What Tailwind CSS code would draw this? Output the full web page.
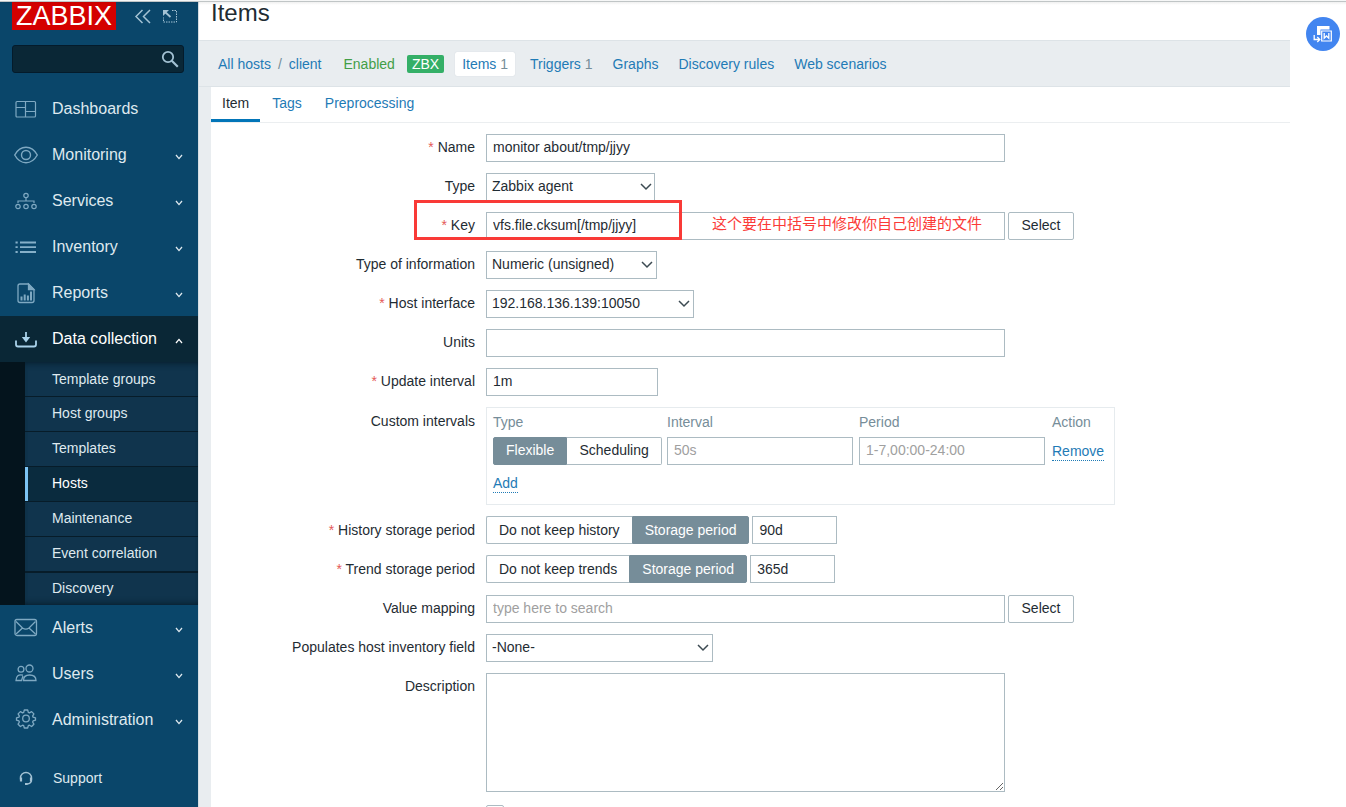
<!DOCTYPE html>
<html lang="en">
<head>
<meta charset="utf-8">
<meta name="viewport" content="width=device-width, initial-scale=1">
<title>Items</title>
<script src="https://cdn.jsdelivr.net/npm/@tailwindcss/browser@4"></script>
</head>
<body class="bg-white font-['Liberation_Sans','Noto_Sans_CJK_SC',sans-serif] text-sm text-[#1f2c33]">
<svg class="hidden">
  <symbol id="down" viewBox="0 0 8 6"><path d="M1 1l3 3.6L7 1" fill="none" stroke="currentColor" stroke-width="1.3"/></symbol>
  <symbol id="chev" viewBox="0 0 12 8"><path d="M1 1l5 5 5-5" fill="none" stroke="currentColor" stroke-width="1.5"/></symbol>
</svg>
<div class="relative flex h-screen overflow-hidden">
  <!-- browser edge shadow -->
  <div class="absolute inset-x-0 top-0 z-10 h-[5px] bg-linear-to-b from-black/10 to-transparent"></div>
  <div class="absolute inset-x-0 top-0 z-10 h-[2px] border-b border-[#c0c5c6] bg-[#f6f7f7]"></div>

  <aside class="flex w-[198px] shrink-0 flex-col bg-[#0a466a] text-[#dfe9ef]">
    <div class="flex h-[45px] shrink-0 items-start pt-[2px] pl-3">
      <a href="#" class="flex h-7 w-[104px] items-center justify-center bg-[#d40000] text-[27px] leading-7 text-white">ZABBIX</a>
      <button aria-label="Collapse" class="mt-[7px] ml-[18px] text-[#a3c2d4]"><svg class="h-[15px] w-[18px]" viewBox="0 0 18 15" fill="none" stroke="currentColor" stroke-width="1.5"><path d="M8.5 1L2 7.5 8.5 14M16 1L9.500 7.500 16 14"/></svg></button>
      <button aria-label="Hide" class="mt-[6px] ml-[10px] text-[#a3c2d4]"><svg class="h-4 w-4" viewBox="0 0 16 16" fill="none" stroke="currentColor"><path d="M10 2.500h4.500v11.500h-13V9.500" stroke-dasharray="1.500 1"/><path d="M2.500 3.500l6 5.500" stroke-width="1.800"/><path d="M1 2h6L1 8z" fill="currentColor" stroke="none"/></svg></button>
    </div>
    <div class="mx-3 mr-[14px] flex h-7 shrink-0 items-center rounded-[3px] border border-[#041b2b] bg-[#0a2736]">
      <input type="text" aria-label="Search" class="h-full min-w-0 flex-1 bg-transparent px-2 outline-none">
      <button aria-label="Search" class="mr-1 text-[#a3c2d4]"><svg class="h-[18px] w-[18px]" viewBox="0 0 18 18" fill="none" stroke="currentColor"><circle cx="7" cy="7" r="5.200" stroke-width="1.800"/><path d="M10.800 10.800l6 6" stroke-width="2.200"/></svg></button>
    </div>
    <nav class="mt-[13px] text-base">
      <a href="#" class="flex h-[46px] items-center pl-[14px]"><svg class="mr-[14px] h-6 w-6 text-[#7fa9c2]" viewBox="0 0 24 24" fill="none" stroke="currentColor" stroke-width="1.200"><rect x="2" y="4.500" width="19.500" height="15.500" rx="1"/><path d="M11.500 4.500V20M2 10.500h9.500M11.500 14.500h10"/></svg>Dashboards</a>
      <a href="#" class="flex h-[46px] items-center pr-[15px] pl-[14px]"><svg class="mr-[14px] h-6 w-6 text-[#7fa9c2]" viewBox="0 0 24 24" fill="none" stroke="currentColor" stroke-width="1.400"><path d="M.7 12C3.500 7 7.500 4.300 12 4.300S20.500 7 23.300 12c-2.800 5-6.800 7.700-11.300 7.700S3.500 17 .7 12z"/><circle cx="12" cy="12" r="4.500"/></svg><span class="flex-1">Monitoring</span><svg class="mt-1 h-[6px] w-2"><use href="#down"/></svg></a>
      <a href="#" class="flex h-[46px] items-center pr-[15px] pl-[14px]"><svg class="mr-[14px] h-6 w-6 text-[#7fa9c2]" viewBox="0 0 24 24" fill="none" stroke="currentColor" stroke-width="1.200"><circle cx="12" cy="6.500" r="2.200"/><circle cx="4" cy="17.500" r="2.200"/><circle cx="12" cy="17.500" r="2.200"/><circle cx="20" cy="17.500" r="2.200"/><path d="M12 8.700v3M4 14v-2h16v2"/></svg><span class="flex-1">Services</span><svg class="mt-1 h-[6px] w-2"><use href="#down"/></svg></a>
      <a href="#" class="flex h-[46px] items-center pr-[15px] pl-[14px]"><svg class="mr-[14px] h-6 w-6 text-[#86b0c9]" viewBox="0 0 24 24" fill="none" stroke="currentColor" stroke-width="1.800"><path d="M1.500 7.500h2.200M6 7.500h16M1.500 12.200h2.200M6 12.200h16M1.500 17h2.200M6 17h16"/></svg><span class="flex-1">Inventory</span><svg class="mt-1 h-[6px] w-2"><use href="#down"/></svg></a>
      <a href="#" class="flex h-[46px] items-center pr-[15px] pl-[14px]"><svg class="mr-[14px] h-6 w-6 text-[#7fa9c2]" viewBox="0 0 24 24" fill="none" stroke="currentColor" stroke-width="1.300"><path d="M6 3h8.500l5.500 5.500V19.500a2 2 0 0 1-2 2H6a2 2 0 0 1-2-2V5a2 2 0 0 1 2-2z"/><path d="M14.500 3v5.500H20z" fill="currentColor"/><path d="M7.500 19.500v-4M10.700 19.500v-6M13.900 19.500v-5M17 19.500v-9" stroke-width="2"/></svg><span class="flex-1">Reports</span><svg class="mt-1 h-[6px] w-2"><use href="#down"/></svg></a>
      <a href="#" class="flex h-[46px] items-center bg-[#0a2736] pr-[15px] pl-[14px] text-white"><svg class="mr-[14px] h-6 w-6 text-[#a9d2ea]" viewBox="0 0 24 24" fill="none" stroke="currentColor" stroke-width="1.800"><path d="M2 13.500v4a2 2 0 0 0 2 2h16a2 2 0 0 0 2-2v-4"/><path d="M12 5v7"/><path d="M7.800 10h8.400L12 15.500z" fill="currentColor" stroke="none"/></svg><span class="flex-1">Data collection</span><svg class="mt-1 h-[6px] w-2 rotate-180"><use href="#down"/></svg></a>
      <div class="border-l-[25px] border-[#04141d] bg-[#10344d] text-sm shadow-[inset_0_6px_6px_-5px_#061c2a,inset_0_-6px_6px_-5px_#061c2a]">
        <a href="#" class="flex h-[34px] items-center pl-[27px]">Template groups</a>
        <a href="#" class="flex h-[35px] items-center border-t border-[#071c29] pb-[2px] pl-[27px]">Host groups</a>
        <a href="#" class="flex h-[35px] items-center border-t border-[#071c29] pb-[2px] pl-[27px]">Templates</a>
        <a href="#" class="flex h-[35px] items-stretch border-t border-[#071c29] bg-[#0a2b3e] text-white"><span class="w-[3px] bg-[#7cc4f4]"></span><span class="flex items-center pb-[2px] pl-6">Hosts</span></a>
        <a href="#" class="flex h-[35px] items-center border-t border-[#071c29] pb-[2px] pl-[27px]">Maintenance</a>
        <a href="#" class="flex h-[35px] items-center border-t border-[#071c29] pb-[2px] pl-[27px]">Event correlation</a>
        <a href="#" class="flex h-[34px] items-center border-t-2 border-[#071c29] pb-[2px] pl-[27px]">Discovery</a>
      </div>
      <a href="#" class="flex h-[46px] items-center pr-[15px] pl-[14px]"><svg class="mr-[14px] h-6 w-6 text-[#7fa9c2]" viewBox="0 0 24 24" fill="none" stroke="currentColor" stroke-width="1.300"><rect x="1" y="3.500" width="21.500" height="16" rx="2"/><path d="M2 5.500l6.500 6.500c2 1.300 4.500 1.300 6.500 0l6.500-6.500M2 18l6.500-6M21.500 18l-6.500-6"/></svg><span class="flex-1">Alerts</span><svg class="mt-1 h-[6px] w-2"><use href="#down"/></svg></a>
      <a href="#" class="flex h-[46px] items-center pr-[15px] pl-[14px]"><svg class="mr-[14px] h-6 w-6 text-[#7fa9c2]" viewBox="0 0 24 24" fill="none" stroke="currentColor" stroke-width="1.300"><circle cx="15.500" cy="6.500" r="3.500"/><circle cx="7" cy="7.300" r="2.900"/><path d="M9.500 18.500c0-4 2.500-5.500 6-5.500s6.500 1.500 6.500 5.500zM9 13.200c-4.500-1.200-7 1-7 5.300h5.500l1.500-4.500"/></svg><span class="flex-1">Users</span><svg class="mt-1 h-[6px] w-2"><use href="#down"/></svg></a>
      <a href="#" class="flex h-[46px] items-center pr-[15px] pl-[14px]"><svg class="mr-[14px] h-6 w-6 text-[#7fa9c2]" viewBox="0 0 24 24" fill="none" stroke="currentColor" stroke-width="1.300" stroke-linejoin="round"><circle cx="12" cy="10.500" r="3.300"/><path d="M10.300 2h3.400l.6 2.400 1.100.5 2.200-1.300 2.300 2.300-1.300 2.200.5 1.100 2.400.6v2.400l-2.400.7-.5 1.100 1.300 2.200-2.300 2.300-2.200-1.300-1.100.5-.6 2.300h-3.400l-.6-2.300-1.100-.5-2.200 1.300-2.300-2.300 1.300-2.200-.5-1.100L2.500 12.200v-2.400l2.400-.6.5-1.100-1.300-2.200 2.300-2.300 2.200 1.300 1.100-.5z"/></svg><span class="flex-1">Administration</span><svg class="mt-1 h-[6px] w-2"><use href="#down"/></svg></a>
      <a href="#" class="mt-[17px] flex h-9 items-center pl-[18px] text-sm"><svg class="mr-[19px] h-4 w-4 text-[#a3c2d4]" viewBox="0 0 16 16" fill="none" stroke="currentColor"><path d="M2.500 9.500V8a5.500 5.500 0 0 1 11 0v1.500c0 3-1.500 4.500-4.500 4.500" stroke-width="1.400"/><path d="M3 7.500v4M13 7.500v4M7 14h2.500" stroke-width="2.200"/></svg>Support</a>
    </nav>
  </aside>

  <main class="min-w-0 flex-1 border-l border-[#d5dde2] bg-white">
    <header class="h-10 pl-3"><h1 class="text-2xl leading-[26px]">Items</h1></header>
    <div class="mr-14 bg-[#e9edf0] pl-3">
      <nav class="-ml-3 flex h-[47px] items-center border-y border-[#dde3e7] pl-[19px] whitespace-nowrap text-[#1f7bb6]">
        <a href="#">All hosts</a><span class="mx-[7px] text-[#768d99]">/</span><a href="#">client</a>
        <span class="ml-[22px] text-[#429e47]">Enabled</span>
        <span class="ml-3 flex h-[18px] items-center rounded-[2px] bg-[#34af67] px-[5px] text-white">ZBX</span>
        <a href="#" class="ml-[11px] flex h-6 items-center rounded-[2px] bg-white px-[7px] shadow-[0_0_1px_#bcc8cf]">Items&nbsp;<span class="text-[#768d99]">1</span></a>
        <a href="#" class="ml-[15px]">Triggers <span class="text-[#768d99]">1</span></a>
        <a href="#" class="ml-5">Graphs</a>
        <a href="#" class="ml-5">Discovery rules</a>
        <a href="#" class="ml-5">Web scenarios</a>
      </nav>
      <div class="-mr-14 min-h-[760px] bg-white">
        <div class="mr-14 flex h-9 gap-px border-b border-[#ebeef0] text-[#1f7bb6]">
          <button class="border-b-[3px] border-[#0275b8] px-[11px] text-[#1f2c33]">Item</button>
          <button class="border-b-[3px] border-transparent px-[11px]">Tags</button>
          <button class="border-b-[3px] border-transparent px-[11px]">Preprocessing</button>
        </div>
        <form class="grid grid-cols-[264px_minmax(0,1fr)] gap-[11px] pt-[11px]">
          <label for="name" class="text-right leading-[26px]"><span class="text-[#e45959]">*</span> Name</label>
          <div><input id="name" type="text" value="monitor about/tmp/jjyy" class="block h-7 w-full max-w-[519px] border border-[#acbbc2] px-[6px] pb-[2px]"></div>

          <label for="type" class="text-right leading-[26px]">Type</label>
          <div class="relative w-[169px]"><select id="type" class="block h-7 w-full appearance-none border border-[#acbbc2] pb-[2px] pl-[5px]"><option>Zabbix agent</option></select><svg class="pointer-events-none absolute top-[10px] right-[3px] h-2 w-3 text-[#3c4a52]"><use href="#chev"/></svg></div>

          <label for="key" class="text-right leading-[26px]"><span class="text-[#e45959]">*</span> Key</label>
          <div class="relative flex gap-[3px]">
            <input id="key" type="text" value="vfs.file.cksum[/tmp/jjyy]" class="block h-7 w-full max-w-[519px] border border-[#acbbc2] px-[6px] pb-[2px]">
            <button type="button" class="h-7 w-[66px] shrink-0 rounded-[2px] border border-[#acbbc2] pb-[2px]">Select</button>
            <div class="absolute -top-3 -left-[72px] h-10 w-[268px] border-[3px] border-[#f93a37]"></div>
            <span class="absolute top-0 left-[226px] text-[15px] leading-6 whitespace-nowrap text-[#fb3b38]">这个要在中括号中修改你自己创建的文件</span>
          </div>

          <label for="info" class="text-right leading-[26px]">Type of information</label>
          <div class="relative w-[171px]"><select id="info" class="block h-7 w-full appearance-none border border-[#acbbc2] pb-[2px] pl-[5px]"><option>Numeric (unsigned)</option></select><svg class="pointer-events-none absolute top-[10px] right-[4px] h-2 w-3 text-[#3c4a52]"><use href="#chev"/></svg></div>

          <label for="iface" class="text-right leading-[26px]"><span class="text-[#e45959]">*</span> Host interface</label>
          <div class="relative w-[208px]"><select id="iface" class="block h-7 w-full appearance-none border border-[#acbbc2] pb-[2px] pl-[5px]"><option>192.168.136.139:10050</option></select><svg class="pointer-events-none absolute top-[10px] right-[4px] h-2 w-3 text-[#3c4a52]"><use href="#chev"/></svg></div>

          <label for="units" class="text-right leading-[26px]">Units</label>
          <div><input id="units" type="text" class="block h-7 w-full max-w-[519px] border border-[#acbbc2] px-[6px] pb-[2px]"></div>

          <label for="upd" class="text-right leading-[26px]"><span class="text-[#e45959]">*</span> Update interval</label>
          <div><input id="upd" type="text" value="1m" class="block h-7 w-[172px] border border-[#acbbc2] px-[6px] pb-[2px]"></div>

          <div class="text-right leading-7">Custom intervals</div>
          <div class="h-[98px] w-[629px] border border-[#e6ebee] pl-[6px]">
            <table class="w-full table-fixed text-left">
              <colgroup><col class="w-[174px]"><col class="w-[192px]"><col class="w-[193px]"><col></colgroup>
              <thead><tr class="h-[29px] text-[#768d99]"><th class="pb-[2px] font-normal">Type</th><th class="pb-[2px] font-normal">Interval</th><th class="pb-[2px] font-normal">Period</th><th class="pb-[2px] font-normal">Action</th></tr></thead>
              <tbody>
                <tr class="h-7">
                  <td><div role="radiogroup" aria-label="Type" class="flex h-7 w-[169px] leading-6">
                    <label class="rounded-l-[2px] border border-[#768d99] bg-[#768d99] px-3 text-white"><input type="radio" name="itype" checked class="sr-only">Flexible</label>
                    <label class="flex-1 rounded-r-[2px] border border-l-0 border-[#acbbc2] text-center"><input type="radio" name="itype" class="sr-only">Scheduling</label>
                  </div></td>
                  <td><input type="text" aria-label="Interval" placeholder="50s" class="block h-7 w-[186px] border border-[#acbbc2] px-[6px] pb-[2px] placeholder:text-[#a0a0a0]"></td>
                  <td><input type="text" aria-label="Period" placeholder="1-7,00:00-24:00" class="block h-7 w-[186px] border border-[#acbbc2] px-[6px] pb-[2px] placeholder:text-[#a0a0a0]"></td>
                  <td><button type="button" class="border-b border-dotted border-[#1f7bb6] leading-[18px] text-[#1f7bb6]">Remove</button></td>
                </tr>
                <tr class="h-9"><td colspan="4"><button type="button" class="border-b border-dotted border-[#1f7bb6] leading-[18px] text-[#1f7bb6]">Add</button></td></tr>
              </tbody>
            </table>
          </div>

          <div class="text-right leading-7"><span class="text-[#e45959]">*</span> History storage period</div>
          <div class="flex leading-[26px]">
            <label class="rounded-l-[2px] border border-r-0 border-[#acbbc2] px-3"><input type="radio" name="hist" class="sr-only">Do not keep history</label>
            <label class="rounded-r-[2px] border border-[#768d99] bg-[#768d99] px-3 text-white"><input type="radio" name="hist" checked class="sr-only">Storage period</label>
            <input type="text" aria-label="History storage period" value="90d" class="ml-[3px] h-7 w-[85px] border border-[#acbbc2] px-[6px]">
          </div>

          <div class="text-right leading-7"><span class="text-[#e45959]">*</span> Trend storage period</div>
          <div class="flex pb-px leading-[26px]">
            <label class="rounded-l-[2px] border border-r-0 border-[#acbbc2] px-3"><input type="radio" name="trend" class="sr-only">Do not keep trends</label>
            <label class="rounded-r-[2px] border border-[#768d99] bg-[#768d99] px-3 text-white"><input type="radio" name="trend" checked class="sr-only">Storage period</label>
            <input type="text" aria-label="Trend storage period" value="365d" class="ml-[3px] h-7 w-[85px] border border-[#acbbc2] px-[6px]">
          </div>

          <label for="vmap" class="text-right leading-[26px]">Value mapping</label>
          <div class="flex gap-[3px]">
            <input id="vmap" type="text" placeholder="type here to search" class="block h-7 w-full max-w-[519px] border border-[#acbbc2] px-[6px] pb-[2px] placeholder:text-[#a0a0a0]">
            <button type="button" class="h-7 w-[66px] shrink-0 rounded-[2px] border border-[#acbbc2] pb-[2px]">Select</button>
          </div>

          <label for="inv" class="text-right leading-[26px]">Populates host inventory field</label>
          <div class="relative w-[227px]"><select id="inv" class="block h-7 w-full appearance-none border border-[#acbbc2] pb-[2px] pl-[5px]"><option>-None-</option></select><svg class="pointer-events-none absolute top-[10px] right-[4px] h-2 w-3 text-[#3c4a52]"><use href="#chev"/></svg></div>

          <label for="desc" class="text-right leading-[26px]">Description</label>
          <div><textarea id="desc" class="block h-[119px] w-full max-w-[519px] resize-y border border-[#acbbc2] px-[6px]"></textarea></div>

          <div></div>
          <div class="pt-[2px]"><input type="checkbox" aria-label="Enabled" class="block h-[18px] w-[18px] appearance-none rounded-[2px] border border-[#acbbc2]"></div>
        </form>
      </div>
    </div>
  </main>

  <button aria-label="Translate" class="absolute top-[17px] right-[6px] flex h-[34px] w-[34px] items-center justify-center rounded-full bg-[#4285f0] text-white"><svg class="h-5 w-5" viewBox="0 0 20 20" fill="none" stroke="currentColor"><path d="M4 2h12.500v3.500H7.500V11H4z" fill="currentColor" stroke="none"/><path d="M8.700 7h9.600v10H8.700z" stroke-width="1.200"/><path d="M11.200 9v5.200l2.300-2.200 2.300 2.200V9" stroke-width="1.300"/><path d="M1.200 11v4.500h5M4.300 13l2.500 2.500L4.300 18" stroke-width="1.300"/></svg></button>
</div>
</body>
</html>
